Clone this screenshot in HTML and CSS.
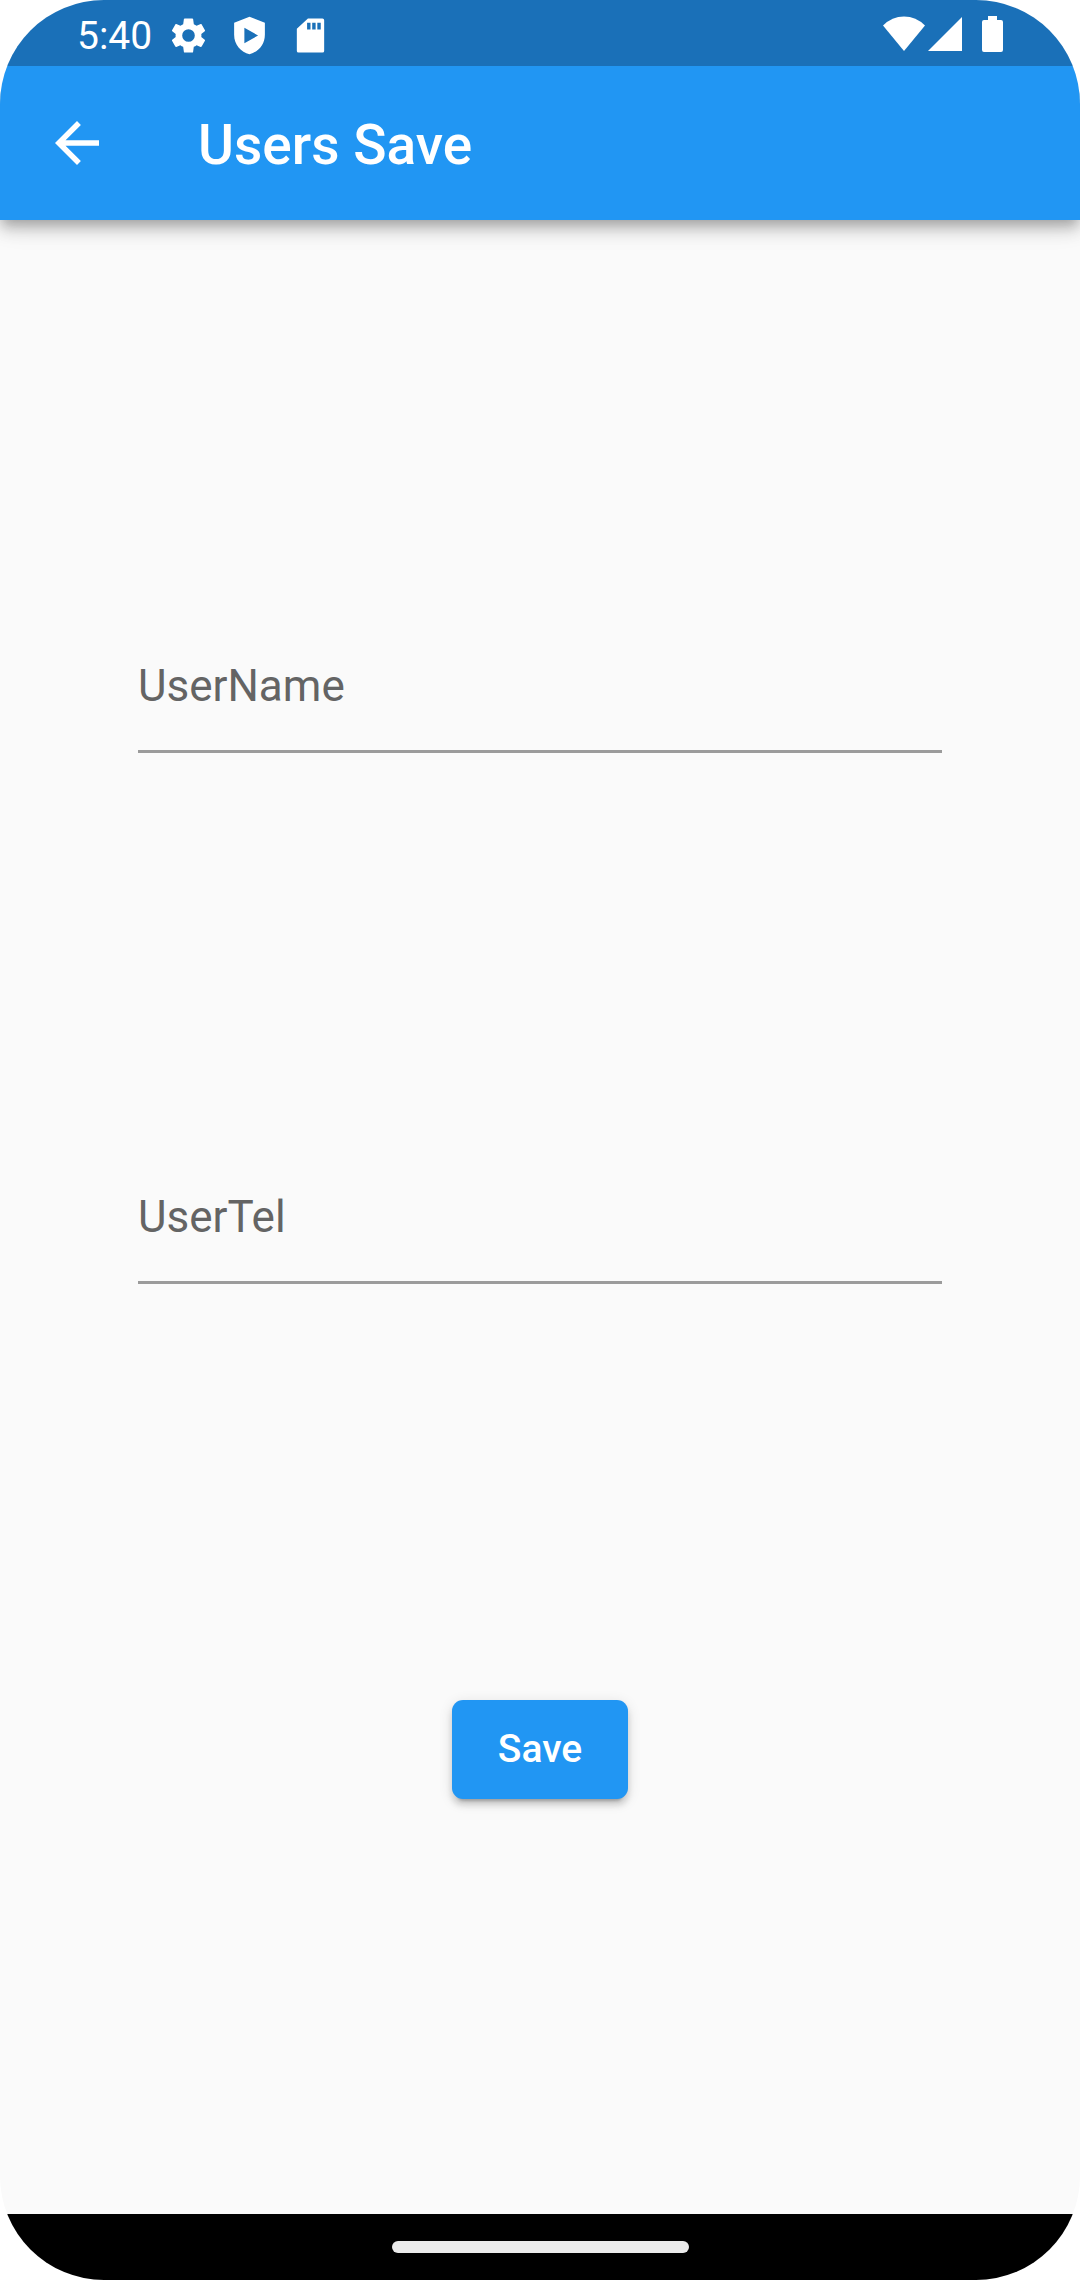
FILE: index.html
```html
<!DOCTYPE html>
<html lang="en">
<head>
<meta charset="utf-8">
<meta name="viewport" content="width=device-width, initial-scale=1">
<title>Users Save</title>
<link rel="stylesheet" href="styles.css">
</head>
<body>
<div class="screen">
  <div class="status-bar">
    <time class="clock">5:40</time>
    <div class="notifications">
      <svg class="status-icon" viewBox="0 0 24 24" aria-hidden="true"><path fill-rule="evenodd" d="M19.500 12.940c.04-.3.06-.61.06-.94s-.02-.64-.07-.94l2.030-1.580c.18-.14.23-.41.12-.61l-1.920-3.320c-.12-.22-.37-.29-.59-.22l-2.390.96c-.5-.38-1.030-.7-1.620-.94L14.700 2.410c-.04-.24-.24-.41-.48-.41H9.780c-.24 0-.43.17-.47.41l-.42 2.940c-.59.24-1.130.57-1.620.94l-2.390-.96c-.22-.08-.47 0-.59.22L2.370 8.870c-.12.21-.08.47.12.61l2.030 1.580c-.05.3-.09.63-.09.94s.02.64.07.94l-2.030 1.580c-.18.14-.23.41-.12.61l1.920 3.320c.12.22.37.29.59.22l2.390-.96c.5.38 1.030.7 1.620.94l.44 2.940c.05.24.24.41.48.41h4.420c.24 0 .44-.17.47-.41l.42-2.940c.59-.24 1.130-.56 1.620-.94l2.390.96c.22.08.47 0 .59-.22l1.920-3.320c.12-.22.07-.47-.12-.61zM12 15.700a3.700 3.700 0 1 1 0-7.400 3.700 3.700 0 0 1 0 7.400z"/></svg>
      <svg class="status-icon" viewBox="0 0 24 24" aria-hidden="true"><path fill-rule="evenodd" d="M12 1 21 4.500V11.500C21 17.500 17 21.500 12 23 7 21.500 3 17.500 3 11.500V4.500zM9 7.500v9l8-4.500z"/></svg>
      <svg class="status-icon" viewBox="0 0 24 24" aria-hidden="true"><path fill-rule="evenodd" d="M10.500 2H19q1 0 1 1v18q0 1-1 1H5q-1 0-1-1V8zM10 4.500v4h2v-4zM13 4.500v4h2v-4zM16 4.500v4h2v-4z"/></svg>
    </div>
    <div class="indicators">
      <svg class="wifi" viewBox="0 0 42 36" aria-hidden="true"><path d="M0 9.500Q9 .500 21 .500T42 9.500L21 35z"/></svg>
      <svg class="signal" viewBox="0 0 34 36" aria-hidden="true"><path d="M34 1V35H0z"/></svg>
      <svg class="battery" viewBox="0 0 21 36" aria-hidden="true"><path d="M6 0h9v4h4q2 0 2 2v28q0 2-2 2H2q-2 0-2-2V6q0-2 2-2h4z"/></svg>
    </div>
  </div>
  <header class="app-bar">
    <button class="back" type="button" aria-label="Back">
      <svg class="back-icon" viewBox="0 0 24 24" aria-hidden="true"><path d="M20 11H7.830l5.590-5.590L12 4l-8 8 8 8 1.410-1.410L7.830 13H20v-2z"/></svg>
    </button>
    <h1 class="title">Users Save</h1>
  </header>
  <form class="form">
    <div class="field">
      <label class="field-label" for="username">UserName</label>
      <input class="field-input" id="username" type="text" placeholder=" ">
    </div>
    <div class="field">
      <label class="field-label" for="usertel">UserTel</label>
      <input class="field-input" id="usertel" type="tel" placeholder=" ">
    </div>
    <div class="action">
      <button class="save" type="submit">Save</button>
    </div>
  </form>
  <div class="nav-bar"><div class="nav-handle"></div></div>
</div>
</body>
</html>
```
FILE: styles.css
```css
* {
  box-sizing: border-box;
}

body {
  margin: 0;
  background: #fff;
  font-family: Roboto, "Liberation Sans", sans-serif;
}

.screen {
  display: flex;
  flex-direction: column;
  min-height: 100vh;
  overflow: hidden;
  border-radius: 104px;
  background: #fafafa;
}

svg {
  display: block;
  fill: #fff;
}

.status-bar {
  z-index: 1;
  display: flex;
  align-items: center;
  height: 66px;
  padding: 4px 77px 0;
  background: #1a70b8;
  color: #fff;
}

.clock {
  padding-top: 2px;
  font-size: 39px;
  line-height: 46px;
}

.notifications {
  display: flex;
  gap: 20px;
  margin-left: 16px;
}

.status-icon {
  width: 41px;
  height: 41px;
}

.indicators {
  display: flex;
  align-items: center;
  margin-left: auto;
  padding-bottom: 2px;
}

.wifi {
  width: 42px;
  height: 36px;
}

.signal {
  width: 34px;
  height: 36px;
  margin-left: 3px;
}

.battery {
  width: 21px;
  height: 36px;
  margin-left: 20px;
}

.app-bar {
  display: flex;
  align-items: center;
  gap: 44px;
  height: 154px;
  background: #2196f3;
  color: #fff;
  box-shadow: 0 6px 11px -3px rgba(0, 0, 0, 0.2), 0 11px 14px rgba(0, 0, 0, 0.14), 0 3px 28px rgba(0, 0, 0, 0.12);
}

.back {
  display: grid;
  place-items: center;
  width: 154px;
  height: 154px;
  padding: 0;
  border: 0;
  background: none;
}

.back-icon {
  width: 66px;
  height: 66px;
}

.title {
  margin: 0;
  padding-top: 4px;
  font-size: 55px;
  font-weight: 500;
  line-height: 66px;
}

.form {
  display: flex;
  flex: 1;
  flex-direction: column;
  justify-content: space-evenly;
  padding: 2px 138px 0;
}

.field {
  display: grid;
  align-items: center;
  height: 132px;
  border-bottom: 3px solid #9b9b9b;
}

.field-label,
.field-input {
  grid-area: 1 / 1;
  font-size: 44px;
  line-height: 52px;
}

.field-label {
  color: #646464;
}

.field-input {
  width: 100%;
  padding: 0;
  border: 0;
  outline: 0;
  background: none;
  font-family: inherit;
}

.field:has(.field-input:not(:placeholder-shown)) .field-label {
  align-self: start;
  font-size: 33px;
  line-height: 36px;
}

.action {
  display: grid;
  place-items: center;
  height: 132px;
}

.save {
  min-width: 176px;
  height: 99px;
  padding: 0 44px;
  border: 0;
  border-radius: 11px;
  background: #2196f3;
  color: #fff;
  font-family: inherit;
  font-size: 39px;
  font-weight: 500;
  box-shadow: 0 8px 3px -6px rgba(0, 0, 0, 0.2), 0 6px 6px rgba(0, 0, 0, 0.14), 0 3px 14px rgba(0, 0, 0, 0.12);
}

.nav-bar {
  display: grid;
  place-items: center;
  height: 66px;
  background: #000;
}

.nav-handle {
  width: 297px;
  height: 12px;
  border-radius: 6px;
  background: #ebebeb;
}
```
